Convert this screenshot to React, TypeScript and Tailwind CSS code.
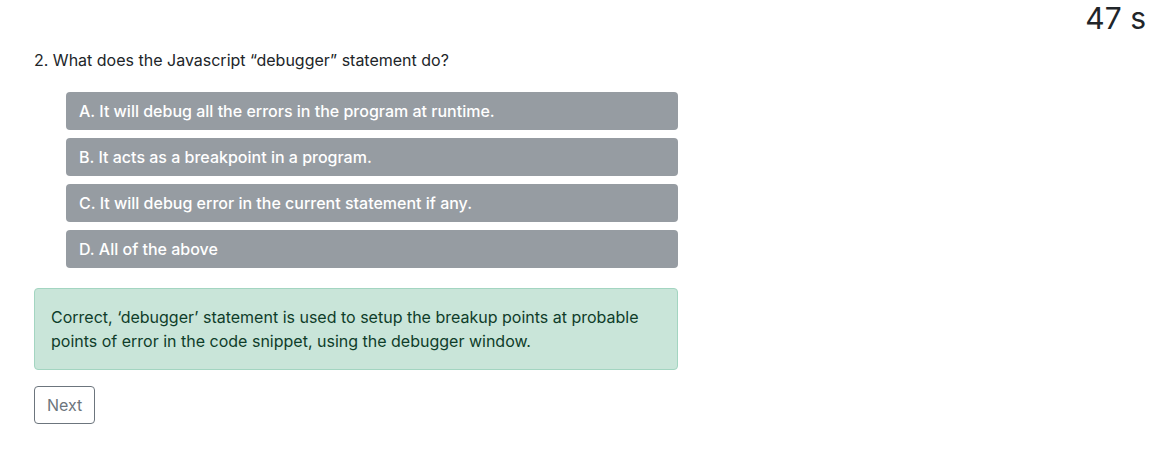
const options = [
  "A. It will debug all the errors in the program at runtime.",
  "B. It acts as a breakpoint in a program.",
  "C. It will debug error in the current statement if any.",
  "D. All of the above",
];

export default function App() {
  return (
    <div className="relative w-[1150px] h-[451px] bg-white text-[#212529] font-['Inter',sans-serif]">
      <div className="flex justify-end pr-[4px]">
        <span className="text-[30px] leading-[36px]">47 s</span>
      </div>
      <div className="pl-[34px] w-[678px]">
        <p className="mt-[13px] text-[16px] leading-[22px]">
          2. What does the Javascript “debugger” statement do?
        </p>
        <div className="mt-[21px] ml-[32px] flex flex-col gap-[8px]">
          {options.map((o) => (
            <div
              key={o}
              className="h-[38px] flex items-center px-[13px] rounded-[4px] bg-[#969ca2] text-white text-[16px] font-medium"
            >
              {o}
            </div>
          ))}
        </div>
        <div className="mt-[20px] px-[16px] py-[16px] rounded-[4px] border border-[#a3d5c1] bg-[#c9e5d9] text-[#0f3d2a] text-[16px] leading-[24px]">
          Correct, ‘debugger’ statement is used to setup the breakup points at probable
          points of error in the code snippet, using the debugger window.
        </div>
        <button className="mt-[16px] h-[38px] px-[12px] rounded-[4px] border border-[#6c757d] text-[#6c757d] text-[16px]">
          Next
        </button>
      </div>
    </div>
  );
}
